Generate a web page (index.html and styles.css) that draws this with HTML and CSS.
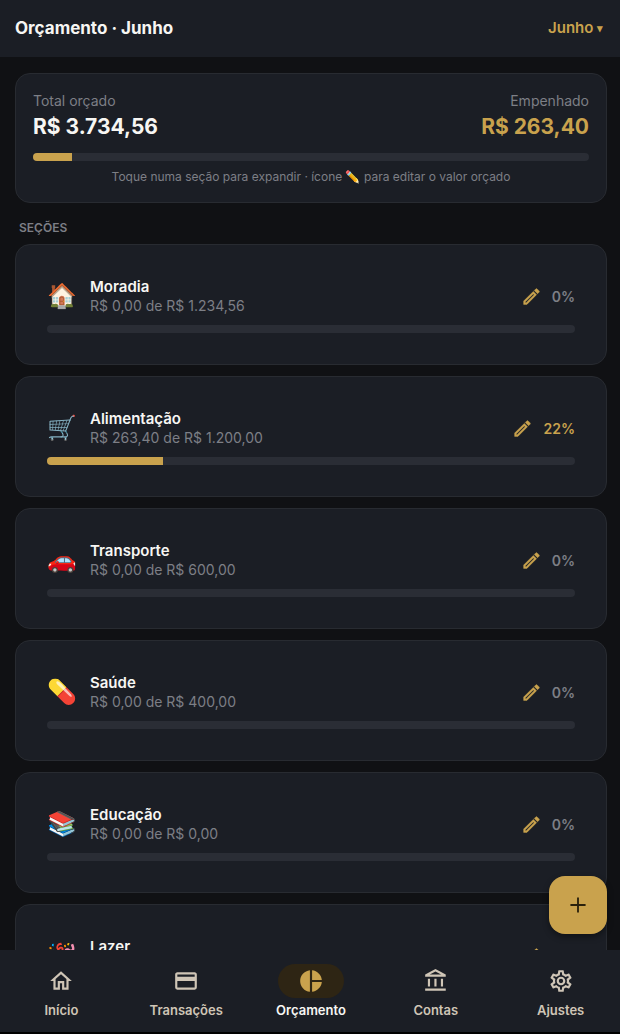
FILE: index.html
```html
<!DOCTYPE html>
<html lang="pt-BR">
  <head>
    <meta charset="UTF-8" />
    <meta name="viewport" content="width=device-width, initial-scale=1.0" />
    <title>Orçamento</title>
    <link rel="stylesheet" href="styles.css">
  </head>
  <body>
    <!-- Shared icons -->
    <svg class="sprite" aria-hidden="true">
      <symbol id="icon-pencil" viewBox="0 0 24 24">
        <path d="M14.06,9L15,9.94L5.92,19H5V18.08L14.06,9M17.66,3C17.41,3 17.15,3.1 16.96,3.29L15.13,5.12L18.88,8.87L20.71,7.04C21.1,6.65 21.1,6 20.71,5.63L18.37,3.29C18.17,3.09 17.92,3 17.66,3M14.06,6.19L3,17.25V21H6.75L17.81,9.94L14.06,6.19Z" />
      </symbol>
    </svg>

    <div class="app">
      <header class="topbar">
        <h1 class="topbar__title">Orçamento · Junho</h1>
        <label class="month">
          <select class="month__select" aria-label="Mês">
            <option>Junho</option>
          </select>
          <span class="month__arrow">▾</span>
        </label>
      </header>

      <main class="content">
        <section class="card summary">
          <div class="summary__row">
            <div>
              <p class="summary__label">Total orçado</p>
              <p class="summary__value">R$ 3.734,56</p>
            </div>
            <div class="summary__spent">
              <p class="summary__label">Empenhado</p>
              <p class="summary__value summary__value--gold">R$ 263,40</p>
            </div>
          </div>
          <div class="bar"><div class="bar__fill" style="width: 7%"></div></div>
          <p class="summary__hint">Toque numa seção para expandir · ícone ✏️ para editar o valor orçado</p>
        </section>

        <h2 class="content__heading">SEÇÕES</h2>

        <div class="sections">
          <article class="card section">
            <div class="section__row">
              <span class="section__emoji">🏠</span>
              <div class="section__text">
                <h3 class="section__name">Moradia</h3>
                <p class="section__amount">R$ 0,00 de R$ 1.234,56</p>
              </div>
              <button class="section__edit" aria-label="Editar Moradia"><svg class="icon"><use href="#icon-pencil" /></svg></button>
              <span class="section__percent">0%</span>
            </div>
            <div class="bar"></div>
          </article>

          <article class="card section">
            <div class="section__row">
              <span class="section__emoji">🛒</span>
              <div class="section__text">
                <h3 class="section__name">Alimentação</h3>
                <p class="section__amount">R$ 263,40 de R$ 1.200,00</p>
              </div>
              <button class="section__edit" aria-label="Editar Alimentação"><svg class="icon"><use href="#icon-pencil" /></svg></button>
              <span class="section__percent section__percent--gold">22%</span>
            </div>
            <div class="bar"><div class="bar__fill" style="width: 22%"></div></div>
          </article>

          <article class="card section">
            <div class="section__row">
              <span class="section__emoji">🚗</span>
              <div class="section__text">
                <h3 class="section__name">Transporte</h3>
                <p class="section__amount">R$ 0,00 de R$ 600,00</p>
              </div>
              <button class="section__edit" aria-label="Editar Transporte"><svg class="icon"><use href="#icon-pencil" /></svg></button>
              <span class="section__percent">0%</span>
            </div>
            <div class="bar"></div>
          </article>

          <article class="card section">
            <div class="section__row">
              <span class="section__emoji">💊</span>
              <div class="section__text">
                <h3 class="section__name">Saúde</h3>
                <p class="section__amount">R$ 0,00 de R$ 400,00</p>
              </div>
              <button class="section__edit" aria-label="Editar Saúde"><svg class="icon"><use href="#icon-pencil" /></svg></button>
              <span class="section__percent">0%</span>
            </div>
            <div class="bar"></div>
          </article>

          <article class="card section">
            <div class="section__row">
              <span class="section__emoji">📚</span>
              <div class="section__text">
                <h3 class="section__name">Educação</h3>
                <p class="section__amount">R$ 0,00 de R$ 0,00</p>
              </div>
              <button class="section__edit" aria-label="Editar Educação"><svg class="icon"><use href="#icon-pencil" /></svg></button>
              <span class="section__percent">0%</span>
            </div>
            <div class="bar"></div>
          </article>

          <article class="card section">
            <div class="section__row">
              <span class="section__emoji">🎉</span>
              <div class="section__text">
                <h3 class="section__name">Lazer</h3>
                <p class="section__amount">R$ 0,00 de R$ 300,00</p>
              </div>
              <button class="section__edit" aria-label="Editar Lazer"><svg class="icon"><use href="#icon-pencil" /></svg></button>
              <span class="section__percent">0%</span>
            </div>
            <div class="bar"></div>
          </article>
        </div>
      </main>

      <button class="fab" aria-label="Adicionar">
        <svg class="fab__icon" viewBox="0 0 24 24"><path d="M12 5V19M5 12H19" /></svg>
      </button>

      <nav class="nav">
        <a class="nav__item" href="#inicio">
          <span class="nav__pill"><svg class="icon" viewBox="0 0 24 24"><path d="M12 5.69L17 10.19V18H15V12H9V18H7V10.19L12 5.69M12 3L2 12H5V20H11V14H13V20H19V12H22L12 3Z" /></svg></span>
          Início
        </a>
        <a class="nav__item" href="#transacoes">
          <span class="nav__pill"><svg class="icon" viewBox="0 0 24 24"><path d="M20,4H4C2.89,4 2,4.89 2,6V18A2,2 0 0,0 4,20H20A2,2 0 0,0 22,18V6C22,4.89 21.1,4 20,4M20,18H4V12H20V18M20,8H4V6H20V8Z" /></svg></span>
          Transações
        </a>
        <a class="nav__item nav__item--active" href="#orcamento">
          <span class="nav__pill"><svg class="icon" viewBox="0 0 24 24"><path d="M11,2V22C5.9,21.5 2,17.2 2,12C2,6.8 5.9,2.5 11,2M13,2V11H22C21.5,6.2 17.8,2.5 13,2M13,13V22C17.7,21.5 21.5,17.8 22,13H13Z" /></svg></span>
          Orçamento
        </a>
        <a class="nav__item" href="#contas">
          <span class="nav__pill"><svg class="icon" viewBox="0 0 24 24"><path d="M6.5,10H4.5V17H6.5V10M12.5,10H10.5V17H12.5V10M21,19H2V21H21V19M18.5,10H16.5V17H18.5V10M11.5,3.26L16.71,6H6.29L11.5,3.26M11.5,1L2,6V8H21V6L11.5,1Z" /></svg></span>
          Contas
        </a>
        <a class="nav__item" href="#ajustes">
          <span class="nav__pill"><svg class="icon" viewBox="0 0 24 24"><path d="M12,8A4,4 0 0,1 16,12A4,4 0 0,1 12,16A4,4 0 0,1 8,12A4,4 0 0,1 12,8M12,10A2,2 0 0,0 10,12A2,2 0 0,0 12,14A2,2 0 0,0 14,12A2,2 0 0,0 12,10M10,22C9.75,22 9.54,21.82 9.5,21.58L9.13,18.93C8.5,18.68 7.96,18.34 7.44,17.94L4.95,18.95C4.73,19.03 4.46,18.95 4.34,18.73L2.34,15.27C2.21,15.05 2.27,14.78 2.46,14.63L4.57,12.97L4.5,12L4.57,11L2.46,9.37C2.27,9.22 2.21,8.95 2.34,8.73L4.34,5.27C4.46,5.05 4.73,4.96 4.95,5.05L7.44,6.05C7.96,5.66 8.5,5.32 9.13,5.07L9.5,2.42C9.54,2.18 9.75,2 10,2H14C14.25,2 14.46,2.18 14.5,2.42L14.87,5.07C15.5,5.32 16.04,5.66 16.56,6.05L19.05,5.05C19.27,4.96 19.54,5.05 19.66,5.27L21.66,8.73C21.79,8.95 21.73,9.22 21.54,9.37L19.43,11L19.5,12L19.43,13L21.54,14.63C21.73,14.78 21.79,15.05 21.66,15.27L19.66,18.73C19.54,18.95 19.27,19.04 19.05,18.95L16.56,17.95C16.04,18.34 15.5,18.68 14.87,18.93L14.5,21.58C14.46,21.82 14.25,22 14,22H10M11.25,4L10.88,6.61C9.68,6.86 8.62,7.5 7.85,8.39L5.44,7.35L4.69,8.65L6.8,10.2C6.4,11.37 6.4,12.64 6.8,13.8L4.68,15.36L5.43,16.66L7.86,15.62C8.63,16.5 9.68,17.14 10.87,17.38L11.24,20H12.76L13.13,17.39C14.32,17.14 15.37,16.5 16.14,15.62L18.57,16.66L19.32,15.36L17.2,13.81C17.6,12.64 17.6,11.37 17.2,10.2L19.31,8.65L18.56,7.35L16.15,8.39C15.38,7.5 14.32,6.86 13.12,6.62L12.75,4H11.25Z" /></svg></span>
          Ajustes
        </a>
      </nav>
    </div>
  </body>
</html>
```

FILE: styles.css
```css
/* General Styles */
:root {
  --bg: #101114;
  --surface: #1b1e25;
  --border: #282b31;
  --track: #2a2d35;
  --gold: #c9a24d;
  --text: #f7f6f3;
  --muted: #7d7f86;
  --nav-text: #cfc5b6;
}

* {
  box-sizing: border-box;
}

body {
  margin: 0;
  font-family: Inter, "Noto Color Emoji", sans-serif;
  font-size: 14px;
  color: var(--text);
  background-color: #000;
}

h1,
h2,
h3,
p {
  margin: 0;
}

button {
  padding: 0;
  border: none;
  font: inherit;
  cursor: pointer;
}

.sprite {
  display: none;
}

.icon {
  display: block;
  width: 26px;
  height: 26px;
  fill: currentColor;
}

.app {
  position: relative;
  display: flex;
  flex-direction: column;
  height: 100vh;
  padding-bottom: 2px;
}

/* Top bar */
.topbar {
  display: flex;
  flex-shrink: 0;
  align-items: center;
  justify-content: space-between;
  height: 57px;
  padding: 0 17px 2px 15px;
  background-color: var(--surface);
}

.topbar__title {
  font-size: 17px;
  font-weight: 700;
}

.month {
  display: flex;
  align-items: center;
  gap: 3px;
  font-size: 15px;
  font-weight: 600;
  color: var(--gold);
}

.month__select {
  padding: 0;
  border: none;
  appearance: none;
  font: inherit;
  color: inherit;
  background: none;
}

.month__arrow {
  font-size: 11px;
}

/* Content */
.content {
  flex: 1;
  min-height: 0;
  padding: 16px 13px 16px 15px;
  overflow-y: auto;
  scrollbar-width: none;
  background-color: var(--bg);
}

.content__heading {
  margin: 16px 4px 8px;
  font-size: 12px;
  font-weight: 600;
  line-height: 17px;
  color: var(--muted);
}

.card {
  border: 1px solid var(--border);
  border-radius: 15px;
  background-color: var(--surface);
}

.bar {
  height: 8px;
  border-radius: 4px;
  overflow: hidden;
  background-color: var(--track);
}

.bar__fill {
  height: 100%;
  background-color: var(--gold);
}

/* Summary card */
.summary {
  padding: 17px;
}

.summary__row {
  display: flex;
  justify-content: space-between;
  margin-bottom: 10px;
}

.summary__spent {
  text-align: right;
}

.summary__label {
  font-size: 14px;
  line-height: 20px;
  color: var(--muted);
}

.summary__value {
  font-size: 21px;
  font-weight: 700;
  line-height: 32px;
}

.summary__value--gold {
  color: var(--gold);
}

.summary__hint {
  margin-top: 8px;
  font-size: 12px;
  line-height: 16px;
  text-align: center;
  color: var(--muted);
}

/* Section cards */
.sections {
  display: flex;
  flex-direction: column;
  gap: 11px;
}

.section {
  padding: 32px 31px 31px;
}

.section__row {
  display: flex;
  align-items: center;
  margin-bottom: 10px;
}

.section__emoji {
  width: 43px;
  font-size: 24px;
  line-height: 38px;
}

.section__text {
  flex: 1;
}

.section__name {
  font-size: 15px;
  font-weight: 600;
  line-height: 20px;
}

.section__amount {
  font-size: 14px;
  line-height: 18px;
  color: var(--muted);
}

.section__edit {
  margin-right: 10px;
  color: var(--gold);
  background: none;
}

.section__edit .icon {
  width: 21px;
  height: 21px;
  stroke: currentColor;
  stroke-width: 0.5;
}

.section__percent {
  font-size: 14px;
  font-weight: 600;
  color: var(--muted);
}

.section__percent--gold {
  color: var(--gold);
}

/* Floating button */
.fab {
  position: absolute;
  right: 13px;
  bottom: 100px;
  display: flex;
  align-items: center;
  justify-content: center;
  width: 58px;
  height: 58px;
  border-radius: 16px;
  background-color: var(--gold);
  box-shadow: 0 3px 6px rgba(0, 0, 0, 0.4);
}

.fab__icon {
  width: 26px;
  height: 26px;
  fill: none;
  stroke: #2a210c;
  stroke-width: 1.7;
}

/* Bottom navigation */
.nav {
  display: flex;
  flex-shrink: 0;
  gap: 8px;
  height: 82px;
  padding: 14px 1px 0 3px;
  background-color: var(--surface);
}

.nav__item {
  display: flex;
  flex: 1;
  flex-direction: column;
  align-items: center;
  gap: 4px;
  font-size: 13px;
  font-weight: 600;
  line-height: 16px;
  text-decoration: none;
  color: var(--nav-text);
}

.nav__item--active {
  color: var(--text);
}

.nav__pill {
  display: flex;
  align-items: center;
  justify-content: center;
  width: 66px;
  height: 34px;
  border-radius: 17px;
}

.nav__item--active .nav__pill {
  color: var(--gold);
  background-color: #2e2514;
}
```
